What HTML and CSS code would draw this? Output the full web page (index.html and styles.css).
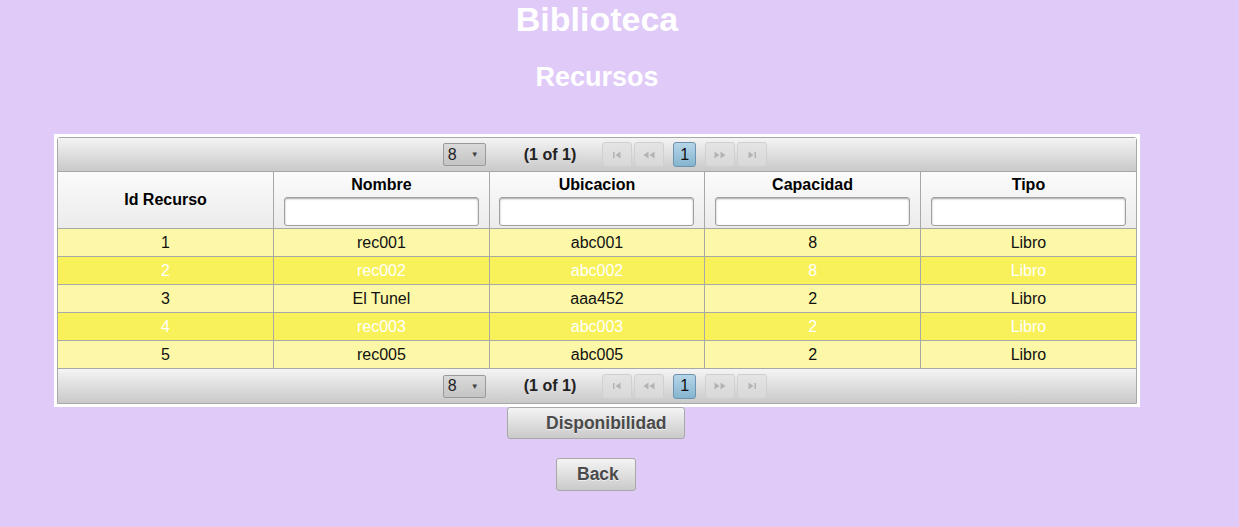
FILE: index.html
```html
<!DOCTYPE html>
<html lang="es">
<head>
<meta charset="utf-8">
<title>Biblioteca</title>
<link rel="stylesheet" href="styles.css">
</head>
<body>
<div class="page">
  <h1 class="title">Biblioteca</h1>
  <h2 class="subtitle">Recursos</h2>
  <div class="dt-frame">
    <div class="dt">
      <div class="paginator top">
        <div class="rpp"><span class="rpp-val">8</span><span class="rpp-arrow">▼</span></div>
        <span class="current">(1 of 1)</span>
        <div class="pages">
          <span class="pbtn disabled"><svg width="10" height="8" viewBox="0 0 10 8"><rect x="1" y="1" width="1.5" height="6" fill="#b3b3b3"/><path d="M8.5 0.5 L3.5 4 L8.5 7.5 Z" fill="#b3b3b3"/></svg></span>
          <span class="pbtn disabled"><svg width="12" height="8" viewBox="0 0 12 8"><path d="M5.5 0.5 L0.5 4 L5.5 7.5 Z M11.5 0.5 L6.5 4 L11.5 7.5 Z" fill="#b3b3b3"/></svg></span>
          <span class="pnum active">1</span>
          <span class="pbtn disabled"><svg width="12" height="8" viewBox="0 0 12 8"><path d="M0.5 0.5 L5.5 4 L0.5 7.5 Z M6.5 0.5 L11.5 4 L6.5 7.5 Z" fill="#b3b3b3"/></svg></span>
          <span class="pbtn disabled"><svg width="10" height="8" viewBox="0 0 10 8"><path d="M1.5 0.5 L6.5 4 L1.5 7.5 Z" fill="#b3b3b3"/><rect x="7.5" y="1" width="1.5" height="6" fill="#b3b3b3"/></svg></span>
        </div>
      </div>
      <table class="grid">
        <thead>
          <tr>
            <th><span class="th-title">Id Recurso</span></th>
            <th><span class="th-title">Nombre</span><input class="filter" type="text"></th>
            <th><span class="th-title">Ubicacion</span><input class="filter" type="text"></th>
            <th><span class="th-title">Capacidad</span><input class="filter" type="text"></th>
            <th><span class="th-title">Tipo</span><input class="filter" type="text"></th>
          </tr>
        </thead>
        <tbody>
          <tr class="odd"><td>1</td><td>rec001</td><td>abc001</td><td>8</td><td>Libro</td></tr>
          <tr class="even"><td>2</td><td>rec002</td><td>abc002</td><td>8</td><td>Libro</td></tr>
          <tr class="odd"><td>3</td><td>El Tunel</td><td>aaa452</td><td>2</td><td>Libro</td></tr>
          <tr class="even"><td>4</td><td>rec003</td><td>abc003</td><td>2</td><td>Libro</td></tr>
          <tr class="odd"><td>5</td><td>rec005</td><td>abc005</td><td>2</td><td>Libro</td></tr>
        </tbody>
      </table>
      <div class="paginator bottom">
        <div class="rpp"><span class="rpp-val">8</span><span class="rpp-arrow">▼</span></div>
        <span class="current">(1 of 1)</span>
        <div class="pages">
          <span class="pbtn disabled"><svg width="10" height="8" viewBox="0 0 10 8"><rect x="1" y="1" width="1.5" height="6" fill="#b3b3b3"/><path d="M8.5 0.5 L3.5 4 L8.5 7.5 Z" fill="#b3b3b3"/></svg></span>
          <span class="pbtn disabled"><svg width="12" height="8" viewBox="0 0 12 8"><path d="M5.5 0.5 L0.5 4 L5.5 7.5 Z M11.5 0.5 L6.5 4 L11.5 7.5 Z" fill="#b3b3b3"/></svg></span>
          <span class="pnum active">1</span>
          <span class="pbtn disabled"><svg width="12" height="8" viewBox="0 0 12 8"><path d="M0.5 0.5 L5.5 4 L0.5 7.5 Z M6.5 0.5 L11.5 4 L6.5 7.5 Z" fill="#b3b3b3"/></svg></span>
          <span class="pbtn disabled"><svg width="10" height="8" viewBox="0 0 10 8"><path d="M1.5 0.5 L6.5 4 L1.5 7.5 Z" fill="#b3b3b3"/><rect x="7.5" y="1" width="1.5" height="6" fill="#b3b3b3"/></svg></span>
        </div>
      </div>
    </div>
  </div>
  <div class="actions">
    <button class="btn btn-disp" type="button">Disponibilidad</button>
    <button class="btn btn-back" type="button">Back</button>
  </div>
</div>
</body>
</html>
```

FILE: styles.css
```css
html, body {
  margin: 0;
  padding: 0;
}
body {
  background: #e0caf8;
  font-family: "Liberation Sans", Arial, sans-serif;
  color: #000;
}
.page {
  width: 1086px;
  margin-left: 54px;
}
.title {
  margin: 0;
  text-align: center;
  color: #fff;
  font-size: 34px;
  line-height: 38px;
  font-weight: bold;
}
.subtitle {
  margin: 24px 0 0 0;
  text-align: center;
  color: #fff;
  font-size: 27px;
  line-height: 30px;
  font-weight: bold;
}
.dt-frame {
  margin-top: 42px;
  background: #fff;
  padding: 3px;
}
.dt {
  border: 1px solid #a8a8a8;
  border-radius: 3px 3px 0 0;
}
.paginator {
  height: 33px;
  display: flex;
  align-items: center;
  justify-content: center;
  padding-left: 18px;
  background: linear-gradient(#f4f4f4, #c9c9c9);
  font-size: 16px;
  font-weight: bold;
}
.paginator.top {
  border-bottom: 1px solid #a8a8a8;
}
.paginator.bottom {
  height: 34px;
}
.rpp {
  border: 1px solid #9a9a9a;
  border-radius: 2px;
  background: linear-gradient(#dadada, #c4c4c4);
  display: flex;
  align-items: center;
  justify-content: space-between;
  padding: 0 6px 0 4px;
  box-sizing: border-box;
  width: 43px;
  height: 23px;
}
.rpp-val {
  font-weight: normal;
  font-size: 16px;
  color: #222;
}
.rpp-arrow {
  font-size: 8px;
  color: #444;
}
.current {
  margin-left: 38px;
  color: #222;
}
.pages {
  display: flex;
  align-items: center;
  margin-left: 26px;
}
.pbtn {
  width: 30px;
  height: 25px;
  box-sizing: border-box;
  border: 1px solid #d0d0d0;
  border-radius: 3px;
  background: linear-gradient(#e4e4e4, #d8d8d8);
  display: flex;
  align-items: center;
  justify-content: center;
  margin-right: 2px;
}
.pnum {
  width: 23px;
  height: 25px;
  box-sizing: border-box;
  border: 1px solid #6c93b0;
  border-radius: 3px;
  background: linear-gradient(#b6d6e8, #85b4cf);
  display: flex;
  align-items: center;
  justify-content: center;
  font-weight: normal;
  font-size: 16px;
  color: #111;
  margin: 0 9px 0 7px;
}
.grid {
  width: 100%;
  border-collapse: collapse;
  table-layout: fixed;
}
.grid th, .grid td {
  border-right: 1px solid #a8a8a8;
  border-bottom: 1px solid #a8a8a8;
  text-align: center;
  padding: 0;
}
.grid th:last-child, .grid td:last-child {
  border-right: none;
}
.grid th {
  height: 56px;
  background: linear-gradient(#fbfbfb, #ebebeb);
  font-size: 16px;
  font-weight: bold;
  vertical-align: middle;
}
.th-title {
  display: block;
  line-height: 20px;
}
.filter {
  display: block;
  box-sizing: border-box;
  width: 195px;
  height: 29px;
  margin: 2px auto 0 auto;
  border: 1px solid #a0a0a0;
  border-radius: 3px;
  background: #fff;
  box-shadow: inset 0 1px 2px rgba(0,0,0,0.35);
}
.grid td {
  height: 27px;
  font-size: 16px;
  line-height: 27px;
}
.grid tr.odd td {
  background: #fcf8a8;
  color: #111;
}
.grid tr.even td {
  background: #f8f159;
  color: #fff;
}
.actions {
  display: flex;
  flex-direction: column;
  align-items: center;
  padding-right: 2px;
}
.btn {
  font-family: "Liberation Sans", Arial, sans-serif;
  font-size: 17.5px;
  font-weight: bold;
  color: #4a4a4a;
  text-shadow: 0 1px 0 rgba(255,255,255,0.6);
  border: 1px solid #a8a8a8;
  border-radius: 3px;
  background: linear-gradient(#f4f4f4, #cacaca);
  box-sizing: border-box;
  cursor: pointer;
}
.btn-disp {
  width: 178px;
  height: 32px;
  padding: 0 19px 0 38px;
}
.btn-back {
  margin-top: 19px;
  width: 80px;
  height: 33px;
  padding: 0 20px;
}
```
